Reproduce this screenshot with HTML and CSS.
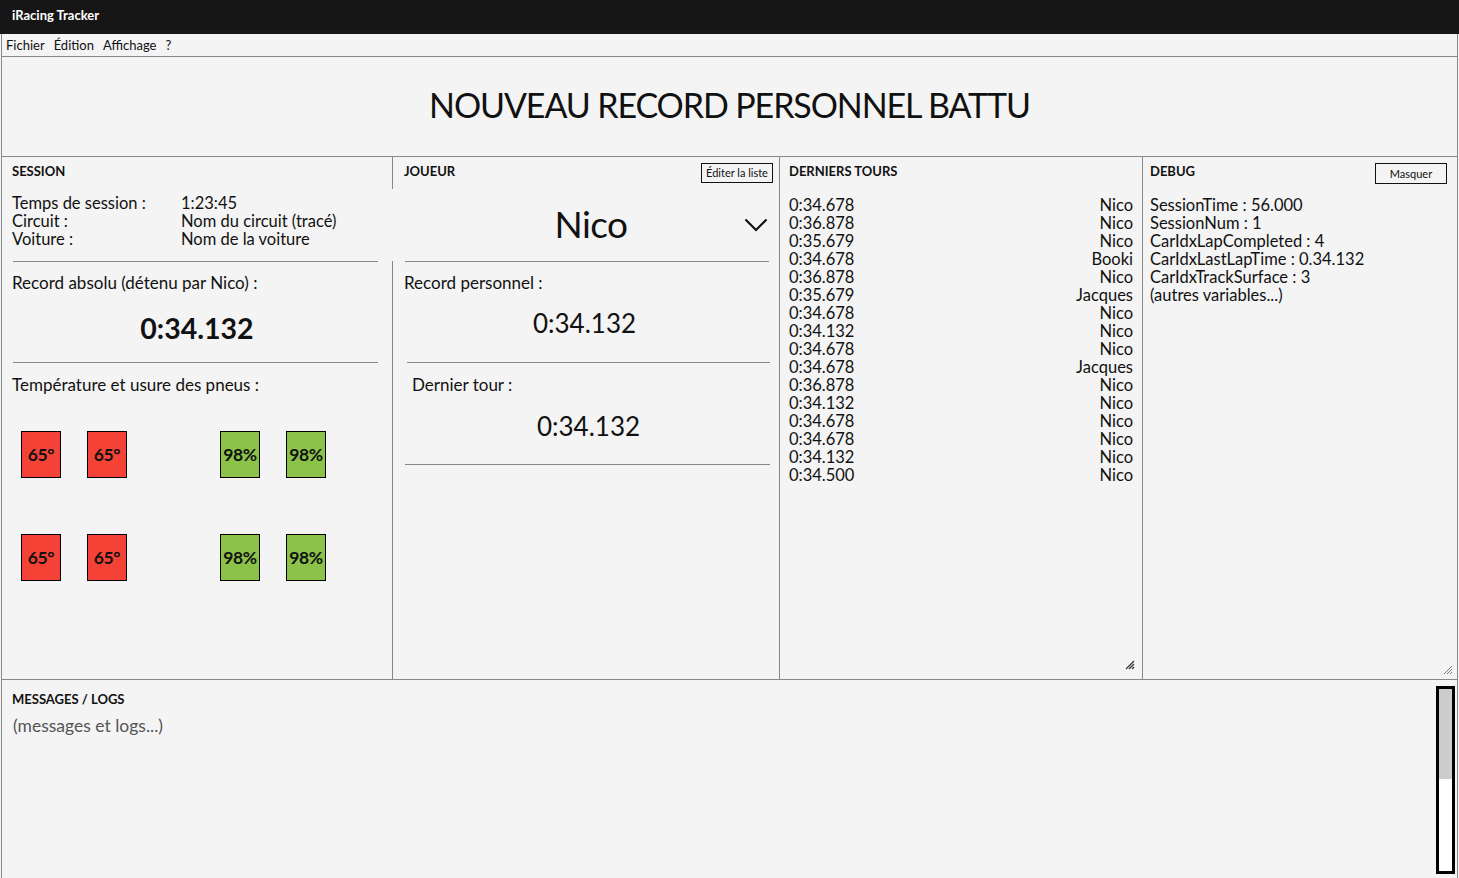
FILE: index.html
```html
<!DOCTYPE html>
<html lang="fr">
<head>
<meta charset="utf-8">
<title>iRacing Tracker</title>
<link rel="stylesheet" href="styles.css">
</head>
<body>
<div class="titlebar">iRacing Tracker</div>
<div class="window">
  <div class="menubar">
    <span>Fichier</span><span>Édition</span><span>Affichage</span><span>?</span>
  </div>
  <div class="banner">NOUVEAU RECORD PERSONNEL BATTU</div>
  <div class="columns">
    <section class="panel session">
      <h2 class="heading">SESSION</h2>
      <div class="info">
        <div class="info-row"><span class="info-label">Temps de session :</span><span>1:23:45</span></div>
        <div class="info-row"><span class="info-label">Circuit :</span><span>Nom du circuit (tracé)</span></div>
        <div class="info-row"><span class="info-label">Voiture :</span><span>Nom de la voiture</span></div>
      </div>
      <hr class="sep sep-session">
      <div class="label label-record">Record absolu (détenu par Nico) :</div>
      <div class="big-time bold">0:34.132</div>
      <hr class="sep sep-session2">
      <div class="label label-tyres">Température et usure des pneus :</div>
      <div class="tyres">
        <div class="tyre-row">
          <div class="tyre hot">65°</div><div class="tyre hot">65°</div>
          <div class="tyre-gap"></div>
          <div class="tyre good">98%</div><div class="tyre good">98%</div>
        </div>
        <div class="tyre-row">
          <div class="tyre hot">65°</div><div class="tyre hot">65°</div>
          <div class="tyre-gap"></div>
          <div class="tyre good">98%</div><div class="tyre good">98%</div>
        </div>
      </div>
    </section>

    <section class="panel joueur">
      <div class="panel-head">
        <h2 class="heading">JOUEUR</h2>
        <button class="btn btn-edit">Éditer la liste</button>
      </div>
      <div class="player-select">
        <span class="player-name">Nico</span>
        <svg class="chevron" width="24" height="14" viewBox="0 0 24 14"><path d="M1.5 1.5 L12 12 L22.5 1.5" fill="none" stroke="#111" stroke-width="2.2"/></svg>
      </div>
      <hr class="sep sep-joueur">
      <div class="label label-perso">Record personnel :</div>
      <div class="big-time time-perso">0:34.132</div>
      <hr class="sep sep-joueur2">
      <div class="label label-last">Dernier tour :</div>
      <div class="big-time time-last">0:34.132</div>
      <hr class="sep sep-joueur3">
    </section>

    <section class="panel tours">
      <h2 class="heading">DERNIERS TOURS</h2>
      <ul class="lap-list">
        <li><span>0:34.678</span><span>Nico</span></li>
        <li><span>0:36.878</span><span>Nico</span></li>
        <li><span>0:35.679</span><span>Nico</span></li>
        <li><span>0:34.678</span><span>Booki</span></li>
        <li><span>0:36.878</span><span>Nico</span></li>
        <li><span>0:35.679</span><span>Jacques</span></li>
        <li><span>0:34.678</span><span>Nico</span></li>
        <li><span>0:34.132</span><span>Nico</span></li>
        <li><span>0:34.678</span><span>Nico</span></li>
        <li><span>0:34.678</span><span>Jacques</span></li>
        <li><span>0:36.878</span><span>Nico</span></li>
        <li><span>0:34.132</span><span>Nico</span></li>
        <li><span>0:34.678</span><span>Nico</span></li>
        <li><span>0:34.678</span><span>Nico</span></li>
        <li><span>0:34.132</span><span>Nico</span></li>
        <li><span>0:34.500</span><span>Nico</span></li>
      </ul>
      <svg class="grip grip-tours" width="10" height="10" viewBox="0 0 10 10"><path d="M1 9 L9 1 M4 9 L9 4 M7 9 L9 7" stroke="#333" stroke-width="1.2"/></svg>
    </section>

    <section class="panel debug">
      <div class="panel-head">
        <h2 class="heading">DEBUG</h2>
        <button class="btn btn-hide">Masquer</button>
      </div>
      <ul class="debug-list">
        <li>SessionTime : 56.000</li>
        <li>SessionNum : 1</li>
        <li>CarIdxLapCompleted : 4</li>
        <li>CarIdxLastLapTime : 0.34.132</li>
        <li>CarIdxTrackSurface : 3</li>
        <li>(autres variables...)</li>
      </ul>
      <svg class="grip grip-debug" width="10" height="10" viewBox="0 0 10 10"><path d="M1 9 L9 1 M4 9 L9 4 M7 9 L9 7" stroke="#777" stroke-width="1"/></svg>
    </section>
  </div>

  <section class="messages">
    <div class="messages-body">
      <h2 class="heading">MESSAGES / LOGS</h2>
      <div class="log-text">(messages et logs...)</div>
    </div>
    <div class="scrollbar"><div class="scroll-thumb"></div></div>
  </section>
</div>
</body>
</html>
```

FILE: styles.css
```css
* { box-sizing: border-box; }

html, body {
  margin: 0;
  padding: 0;
  background: #f4f4f4;
  height: 878px;
  overflow: hidden;
}

body {
  font-family: "Lato", "Noto Sans", sans-serif;
  color: #111;
}

.titlebar {
  height: 34px;
  background: #161616;
  color: #fff;
  font-size: 13px;
  font-weight: 700;
  padding-left: 12px;
  line-height: 31px;
}

.window {
  margin: 0 1px;
  border-left: 1px solid #888;
  border-right: 1px solid #888;
  height: 844px;
  display: flex;
  flex-direction: column;
}

.menubar {
  height: 23px;
  border-bottom: 1px solid #888;
  padding-left: 4px;
  font-size: 13px;
  line-height: 22px;
  display: flex;
  gap: 9px;
}

.banner {
  height: 100px;
  border-bottom: 1px solid #888;
  text-align: center;
  font-size: 34px;
  line-height: 96px;
  letter-spacing: -1.1px;
}

.columns {
  height: 524px;
  border-bottom: 1px solid #888;
  display: grid;
  grid-template-columns: 390px 388px 363px 314px;
}

.panel {
  position: relative;
  font-size: 17px;
}

.heading {
  margin: 0;
  font-size: 13px;
  font-weight: 700;
  line-height: 16px;
}

.session { padding: 6px 0 0 10px; }

.info {
  margin-top: 15px;
  font-size: 16.5px;
  line-height: 18px;
}

.info-row { display: flex; height: 18px; }
.info-label { width: 169px; }

.sep {
  border: 0;
  border-top: 1px solid #888;
  margin: 0;
}

.sep-session { margin: 13px 14px 0 1px; }
.sep-session2 { margin: 9px 14px 0 1px; }

.label { line-height: 20px; }
.label-record { margin-top: 11px; }

.big-time {
  font-size: 26px;
  line-height: 30px;
  text-align: center;
}

.bold { font-weight: 700; }

.session .big-time {
  font-size: 28.5px;
  margin-top: 20px;
  margin-right: 10px;
  height: 40px;
}

.label-tyres { margin-top: 12px; }

.tyres {
  margin-top: 36px;
  padding-left: 9px;
  display: flex;
  flex-direction: column;
  gap: 56px;
}

.tyre-row {
  display: flex;
  gap: 26px;
}

.tyre-gap { width: 67px; margin-left: -26px; }

.tyre {
  width: 40px;
  height: 47px;
  border: 1px solid #000;
  display: flex;
  align-items: center;
  justify-content: center;
  font-weight: 700;
  font-size: 17.5px;
  letter-spacing: -0.3px;
}

.hot { background: #f44336; }
.good { background: #8bc34a; }

.joueur {
  border-left: 1px solid #888;
  border-right: 1px solid #888;
  padding: 6px 6px 0 11px;
}

.panel-head {
  display: flex;
  justify-content: space-between;
  align-items: flex-start;
  height: 16px;
}

.btn {
  font-family: inherit;
  font-size: 11px;
  color: #111;
  background: transparent;
  border: 1px solid #111;
  padding: 0;
  height: 20px;
  flex-shrink: 0;
}

.btn-edit { width: 72px; margin-top: 0; }

.player-select {
  margin-left: -12px;
  padding-left: 12px;
  background: #f4f4f4;
  height: 72px;
  margin-top: 10px;
  display: flex;
  align-items: center;
  position: relative;
}

.player-name {
  flex: 1;
  text-align: center;
  font-size: 37px;
  padding-left: 34px;
  margin-top: -2px;
  letter-spacing: -0.5px;
}

.chevron { margin-right: 5px; margin-top: 0; }

.sep-joueur { margin: 0 4px 0 1px; }
.label-perso { margin-top: 11px; }
.time-perso { margin-top: 15px; margin-right: 8px; }
.sep-joueur2 { margin: 24px 3px 0 3px; }
.label-last { margin-top: 12px; padding-left: 8px; }
.time-last { margin-top: 16px; margin-right: 0; }
.sep-joueur3 { margin: 23px 3px 0 1px; }

.tours {
  border-right: 1px solid #888;
  padding: 6px 9px 0 9px;
}

.lap-list, .debug-list {
  list-style: none;
  margin: 17px 0 0;
  padding: 0;
  line-height: 18px;
  font-size: 16.5px;
}

.lap-list li {
  display: flex;
  justify-content: space-between;
}

.grip { position: absolute; }
.grip-tours { right: 7px; bottom: 9px; }
.grip-debug { right: 4px; bottom: 4px; }

.debug { padding: 6px 9px 0 7px; }
.btn-hide { width: 72px; height: 21px; margin-top: 0; margin-right: 1px; }

.messages {
  flex: 1;
  display: flex;
  padding: 6px 2px 4px 10px;
}

.messages-body { flex: 1; padding-top: 5px; }

.log-text {
  color: #555;
  font-size: 17.5px;
  margin-top: 8px;
  padding-left: 1px;
}

.scrollbar {
  width: 19px;
  height: 188px;
  border: 3px solid #000;
  background: #fff;
}

.scroll-thumb {
  height: 90px;
  background: #ccc;
}
```
